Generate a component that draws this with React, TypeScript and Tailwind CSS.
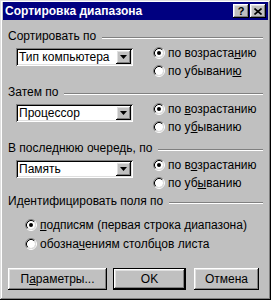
import React from "react"

const raised = "shadow-[inset_-1px_-1px_#000,inset_1px_1px_#fff,inset_-2px_-2px_#808080,inset_2px_2px_#dfdfdf]"
const sunken = "shadow-[inset_1px_1px_#808080,inset_-1px_-1px_#fff,inset_2px_2px_#000,inset_-2px_-2px_#dfdfdf]"

function Radio({ checked }: { checked?: boolean }) {
    return (
        <svg width="12" height="12" viewBox="0 0 12 12" className="shrink-0">
            <circle cx="6" cy="6" r="4" fill="#fff" />
            <path d="M2.11 9.89 A5.5 5.5 0 0 1 9.89 2.11" fill="none" stroke="#808080" />
            <path d="M9.89 2.11 A5.5 5.5 0 0 1 2.11 9.89" fill="none" stroke="#fff" />
            <path d="M2.82 9.18 A4.5 4.5 0 0 1 9.18 2.82" fill="none" stroke="#000" />
            <path d="M9.18 2.82 A4.5 4.5 0 0 1 2.82 9.18" fill="none" stroke="#dfdfdf" />
            {checked && <circle cx="6" cy="6" r="2" fill="#000" />}
        </svg>
    )
}

function Option({ checked, children, h = "h-[18px]" }: { checked?: boolean; children: React.ReactNode; h?: string }) {
    return (
        <div className={`flex items-center gap-[3px] ${h}`}>
            <Radio checked={checked} />
            <span className="whitespace-nowrap">{children}</span>
        </div>
    )
}

function Header({ label, mt }: { label: string; mt: string }) {
    return (
        <div className={`flex items-center h-[13px] ${mt}`}>
            <span className="whitespace-nowrap">{label}</span>
            <div className="flex-1 ml-[6px] mt-[5px] border-t border-[#808080] border-b border-b-white" />
        </div>
    )
}

function Combo({ value }: { value: string }) {
    return (
        <div className={`flex items-stretch w-[117px] h-[18px] bg-white p-[2px] ${sunken}`}>
            <div className="flex-1 flex items-center pl-[1px] leading-none">{value}</div>
            <div className={`w-[15px] flex items-center justify-center bg-[#c0c0c0] ${raised}`}>
                <svg width="7" height="4" viewBox="0 0 7 4">
                    <path d="M0 0h7L3.5 4z" fill="#000" />
                </svg>
            </div>
        </div>
    )
}

function SortBlock({ label, value, mt, asc, desc }: { label: string; value: string; mt: string; asc: React.ReactNode; desc: React.ReactNode }) {
    return (
        <div>
            <Header label={label} mt={mt} />
            <div className="flex mt-[2px]">
                <div className="ml-[8px] mt-[4px]">
                    <Combo value={value} />
                </div>
                <div className="ml-[20px]">
                    <Option checked>{asc}</Option>
                    <Option>{desc}</Option>
                </div>
            </div>
        </div>
    )
}

function Button({ children, w, isDefault }: { children: React.ReactNode; w: string; isDefault?: boolean }) {
    return (
        <div className={`${w} h-[22px] ${isDefault ? "border border-black" : ""}`}>
            <div className={`w-full h-full flex items-center justify-center ${raised}`}>{children}</div>
        </div>
    )
}

export default function App() {
    return (
        <div
            className={`w-[271px] h-[300px] bg-[#c0c0c0] p-[3px] pt-[2px] text-[12px] text-black shadow-[inset_-1px_-1px_#000,inset_1px_1px_#dfdfdf,inset_-2px_-2px_#808080,inset_2px_2px_#fff]`}
            style={{ fontFamily: '"Liberation Sans", Arial, sans-serif' }}
        >
            <div className="h-[18px] bg-[#000080] flex items-center justify-between pl-[2px] pr-[2px]">
                <span className="text-white font-bold text-[12px]">Сортировка диапазона</span>
                <div className="flex gap-[1px]">
                    <div className={`w-[16px] h-[14px] bg-[#c0c0c0] flex items-center justify-center font-bold text-[11px] leading-none ${raised}`}>?</div>
                    <div className={`w-[16px] h-[14px] bg-[#c0c0c0] flex items-center justify-center ${raised}`}>
                        <svg width="8" height="7" viewBox="0 0 8 7">
                            <path d="M0.5 0.5L7.5 6.5M7.5 0.5L0.5 6.5" stroke="#000" strokeWidth="1.6" />
                        </svg>
                    </div>
                </div>
            </div>

            <div className="px-[5px]">
                <SortBlock
                    label="Сортировать по"
                    value="Тип компьютера"
                    mt="mt-[9px]"
                    asc={<>по возраста<u>н</u>ию</>}
                    desc={<>по убывани<u>ю</u></>}
                />
                <SortBlock
                    label="Затем по"
                    value="Процессор"
                    mt="mt-[5px]"
                    asc={<>по <u>в</u>озрастанию</>}
                    desc={<>по у<u>б</u>ыванию</>}
                />
                <SortBlock
                    label="В последнюю очередь, по"
                    value="Память"
                    mt="mt-[5px]"
                    asc={<>по в<u>о</u>зрастанию</>}
                    desc={<>по уб<u>ы</u>ванию</>}
                />

                <Header label="Идентифицировать поля по" mt="mt-[2px]" />
                <div className="ml-[17px] mt-[8px]">
                    <Option checked h="h-[19px]"><u>п</u>одписям (первая строка диапазона)</Option>
                    <Option h="h-[19px]">обозна<u>ч</u>ениям столбцов листа</Option>
                </div>

                <div className="flex mt-[15px]">
                    <Button w="w-[99px]">П<u>а</u>раметры...</Button>
                    <div className="ml-[6px]">
                        <Button w="w-[73px]" isDefault>OK</Button>
                    </div>
                    <div className="ml-[8px]">
                        <Button w="w-[65px]">Отмена</Button>
                    </div>
                </div>
            </div>
        </div>
    )
}
